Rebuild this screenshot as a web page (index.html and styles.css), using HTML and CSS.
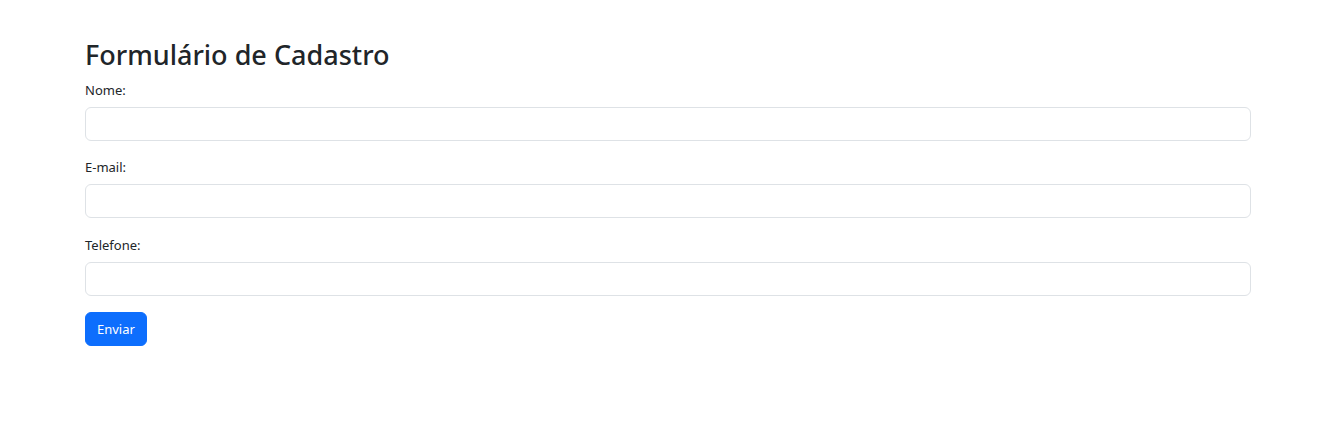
FILE: index.html
```html
<!DOCTYPE html>
<html lang="pt-BR">
<head>
<meta charset="utf-8">
<title>Formulário de Cadastro</title>
<link rel="stylesheet" href="styles.css">
</head>
<body>
<div class="container">
  <h2 class="title">Formulário de Cadastro</h2>
  <form class="form">
    <div class="group">
      <label class="label" for="nome">Nome:</label>
      <input class="control" type="text" id="nome">
    </div>
    <div class="group">
      <label class="label" for="email">E-mail:</label>
      <input class="control" type="email" id="email">
    </div>
    <div class="group">
      <label class="label" for="tel">Telefone:</label>
      <input class="control" type="tel" id="tel">
    </div>
    <button class="btn" type="button">Enviar</button>
  </form>
</div>
</body>
</html>
```

FILE: styles.css
```css
* { box-sizing: border-box; }
body {
  margin: 0;
  font-family: "Noto Sans", "Open Sans", sans-serif;
  color: #212529;
  background: #fff;
  font-size: 14px;
}
.container {
  max-width: 1166px;
  margin: 0 auto;
  padding-top: 36px;
}
.title {
  margin: 0 0 6px;
  font-size: 27px;
  font-weight: 500;
  line-height: 38px;
}
.form { display: flex; flex-direction: column; align-items: flex-start; }
.group { width: 100%; margin-bottom: 16px; display: flex; flex-direction: column; }
.label {
  font-size: 13px;
  line-height: 20px;
  margin-bottom: 7px;
}
.group:nth-child(3) { margin-top: 0.5px; }
.control {
  width: 100%;
  height: 34px;
  border: 1px solid #dee2e6;
  border-radius: 6px;
  padding: 6px 12px;
  font: inherit;
  background: #fff;
}
.btn {
  height: 34px;
  padding: 0 11px;
  border: 1px solid #0d6efd;
  background: #0d6efd;
  color: #fff;
  border-radius: 6px;
  font: inherit;
  font-size: 13px;
}
```
